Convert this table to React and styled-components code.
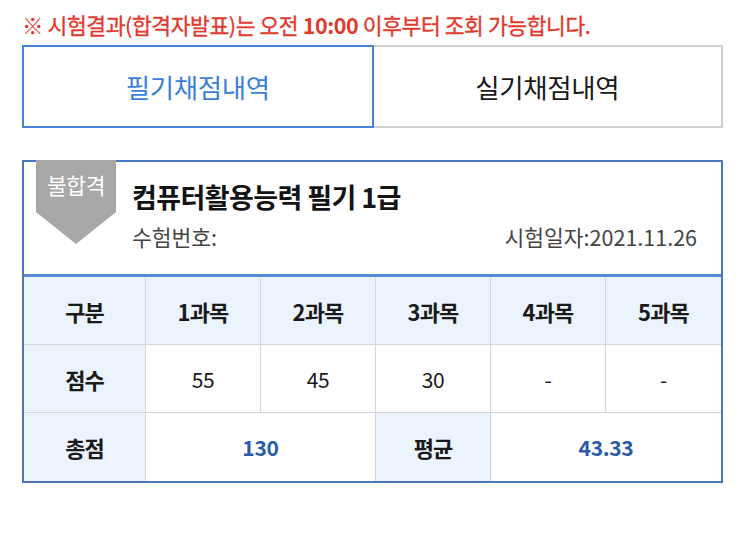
import React from "react"
import styled, { createGlobalStyle } from "styled-components"

const GlobalStyle = createGlobalStyle`
  html, body {
    margin: 0;
    padding: 0;
    background: #fff;
  }
  body {
    font-family: "Noto Sans CJK KR", "Noto Sans", sans-serif;
    color: #1a1a1a;
  }
`

const Page = styled.div`
  width: 743px;
  height: 534px;
  padding: 11px 20px 0 22px;
  box-sizing: border-box;
`

const Notice = styled.p`
  margin: 0;
  font-size: 21.5px;
  line-height: 28px;
  font-weight: 400;
  color: #df3a2e;
  letter-spacing: -0.4px;
  white-space: nowrap;
  -webkit-text-stroke: 0.35px #df3a2e;

  b {
    font-weight: 700;
    -webkit-text-stroke: 0;
  }
`

const Tabs = styled.div`
  display: flex;
  margin-top: 6px;
  height: 83px;
`

const Tab = styled.div`
  flex: 1;
  display: flex;
  align-items: center;
  justify-content: center;
  box-sizing: border-box;
  font-size: 26.5px;
  letter-spacing: -0.4px;
  color: ${(p) => (p.$active ? "#3d7fd9" : "#1a1a1a")};
  border: ${(p) => (p.$active ? "2px solid #4a86d8" : "2px solid #cfcfcf")};
  border-left-width: ${(p) => (p.$active ? "2px" : "0")};
  background: #fff;
`

const Card = styled.div`
  margin-top: 32px;
  width: 701px;
  border: 2px solid #4a76c2;
  box-sizing: border-box;
`

const Head = styled.div`
  display: flex;
  align-items: flex-start;
  height: 112px;
  border-bottom: 3px solid #5b8bd8;
`

const Badge = styled.div`
  flex: none;
  margin: -2px 0 0 12px;
  width: 80px;
  height: 84px;
  background: #a8a8a8;
  clip-path: polygon(0 0, 100% 0, 100% 62%, 50% 100%, 0 62%);
  color: #fff;
  font-size: 21.5px;
  text-align: center;
  padding-top: 12px;
  box-sizing: border-box;
  line-height: 26px;
  letter-spacing: -0.5px;
`

const Info = styled.div`
  flex: 1;
  padding: 19px 24px 0 16px;
`

const Title = styled.h1`
  margin: 0;
  font-size: 27px;
  line-height: 32px;
  font-weight: 700;
  letter-spacing: -0.6px;
  color: #141414;
`

const Meta = styled.div`
  display: flex;
  justify-content: space-between;
  margin-top: 10px;
  font-size: 21.5px;
  line-height: 28px;
  color: #444;
`

const Grid = styled.div`
  display: grid;
  grid-template-columns: 122px repeat(5, 1fr);
  grid-auto-rows: 68px;
`

const Cell = styled.div`
  display: flex;
  align-items: center;
  justify-content: center;
  grid-column: span ${(p) => p.$span || 1};
  background: ${(p) => (p.$head ? "#ebf3fd" : "#fff")};
  border-right: ${(p) => (p.$last ? "0" : "1px solid #d6d6d6")};
  border-bottom: ${(p) => (p.$bottom ? "0" : "1px solid #d6d6d6")};
  font-size: ${(p) => (p.$head ? "22px" : "21px")};
  font-weight: ${(p) => (p.$head || p.$blue ? 700 : 400)};
  color: ${(p) => (p.$blue ? "#2b5ba8" : "#1a1a1a")};
  letter-spacing: ${(p) => (p.$head ? "-0.9px" : "-0.3px")};
`

const heads = ["구분", "1과목", "2과목", "3과목", "4과목", "5과목"]
const scores = ["55", "45", "30", "-", "-"]

export default function App() {
  return (
    <Page>
      <GlobalStyle />
      <Notice>
        <b>※</b> 시험결과(합격자발표)는 오전 <b>10:00</b> 이후부터 조회 가능합니다.
      </Notice>

      <Tabs>
        <Tab $active>필기채점내역</Tab>
        <Tab>실기채점내역</Tab>
      </Tabs>

      <Card>
        <Head>
          <Badge>불합격</Badge>
          <Info>
            <Title>컴퓨터활용능력 필기 1급</Title>
            <Meta>
              <span>수험번호:</span>
              <span>시험일자:2021.11.26</span>
            </Meta>
          </Info>
        </Head>

        <Grid>
          {heads.map((h, i) => (
            <Cell key={h} $head $last={i === 5}>
              {h}
            </Cell>
          ))}

          <Cell $head>점수</Cell>
          {scores.map((s, i) => (
            <Cell key={i} $last={i === 4}>
              {s}
            </Cell>
          ))}

          <Cell $head $bottom>총점</Cell>
          <Cell $span={2} $blue $bottom>130</Cell>
          <Cell $head $bottom>평균</Cell>
          <Cell $span={2} $blue $bottom $last>43.33</Cell>
        </Grid>
      </Card>
    </Page>
  )
}
